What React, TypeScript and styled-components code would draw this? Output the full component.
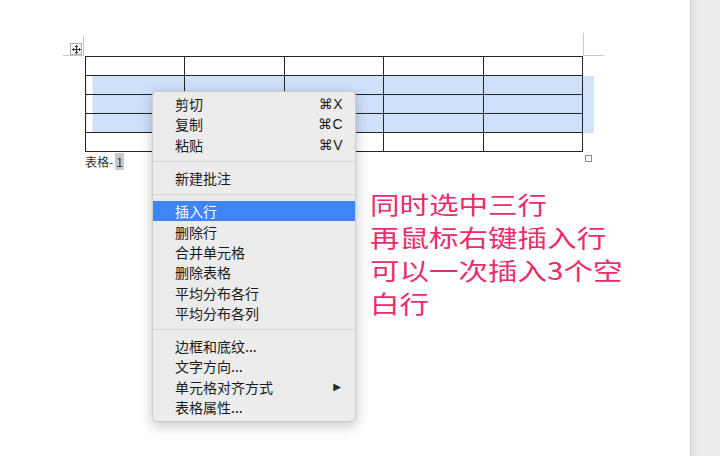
import React from "react";
import styled, { createGlobalStyle } from "styled-components";

const GlobalStyle = createGlobalStyle`
  html, body {
    margin: 0;
    padding: 0;
    background: #fff;
  }
  body {
    width: 720px;
    height: 456px;
    overflow: hidden;
    font-family: "Noto Sans CJK SC", "Noto Sans", sans-serif;
  }
`;

const Screen = styled.div`
  display: flex;
  width: 720px;
  height: 456px;
`;

const Page = styled.div`
  position: relative;
  flex: 1;
  padding: 56px 0 0 85px;
  background: #fff;
`;

const Gutter = styled.div`
  width: 29px;
  border-left: 1px solid #d4d4d4;
  background: linear-gradient(to right, #e2e2e2, #eeeeee 35%, #ebebeb);
`;

/* table block, with Word's corner guides drawn by the pseudo elements */
const TableArea = styled.div`
  position: relative;
  width: 520px;

  &::before {
    content: "";
    position: absolute;
    left: -22px;
    top: -20px;
    width: 20px;
    height: 19px;
    border-right: 1px solid #c9c9c9;
    border-bottom: 1px solid #c9c9c9;
  }

  &::after {
    content: "";
    position: absolute;
    left: 498px;
    top: -23px;
    width: 20px;
    height: 22px;
    border-left: 1px solid #c9c9c9;
    border-bottom: 1px solid #c9c9c9;
  }
`;

const Grid = styled.table`
  border-collapse: collapse;
  table-layout: fixed;
`;

const Row = styled.tr`
  height: 19px;
`;

const Cell = styled.td<{ $sel?: boolean; $first?: boolean }>`
  width: 99.4px;
  height: 19px;
  padding: 0;
  box-sizing: border-box;
  border: 1px solid #262626;
  background: ${({ $sel, $first }) =>
    !$sel
      ? "transparent"
      : $first
      ? "linear-gradient(to right, transparent 6px, #cfe0fb 6px)"
      : "#cfe0fb"};
`;

const EndMark = styled.td<{ $sel?: boolean }>`
  width: 11px;
  padding: 0;
  border: none;
  background: ${({ $sel }) => ($sel ? "#d4e3fb" : "transparent")};
`;

const Caption = styled.div`
  margin-top: 2px;
  font-family: "Noto Sans CJK SC", serif;
  font-size: 12px;
  line-height: 16px;
  color: #333;
`;

const Mark = styled.span`
  background: #c9c9c9;
  padding: 0 1px;
  margin-left: 2px;
`;

const ResizeHandle = styled.div`
  position: absolute;
  left: 500px;
  top: 99px;
  width: 5px;
  height: 5px;
  border: 1px solid #8a8a8a;
  background: #fff;
`;

const MoveHandle = styled.div`
  position: absolute;
  left: -15px;
  top: -13px;
  width: 10px;
  height: 10px;
  border: 1px solid #b0b0b0;
  background: #f3f3f3;
  display: flex;
  align-items: center;
  justify-content: center;
`;

const Menu = styled.div`
  position: absolute;
  left: 152px;
  top: 91px;
  width: 204px;
  box-sizing: border-box;
  padding: 2px 0 4px;
  background: #ececec;
  border: 1px solid rgba(0, 0, 0, 0.13);
  border-radius: 5px;
  box-shadow: 0 4px 14px rgba(0, 0, 0, 0.22), 0 0 2px rgba(0, 0, 0, 0.1);
`;

const Item = styled.div<{ $active?: boolean }>`
  display: flex;
  align-items: center;
  justify-content: space-between;
  height: 20.3px;
  padding: 0 12px 0 22px;
  font-size: 14px;
  color: ${({ $active }) => ($active ? "#fff" : "#1a1a1a")};
  background: ${({ $active }) => ($active ? "#3e86f3" : "transparent")};
`;

const Shortcut = styled.span`
  font-family: "Liberation Sans", "DejaVu Sans", sans-serif;
  font-size: 14px;
  letter-spacing: 0.5px;
`;

const Arrow = styled.span`
  font-family: "DejaVu Sans", sans-serif;
  font-size: 10px;
  margin-right: 2px;
  color: #2a2a2a;
`;

const Separator = styled.div`
  height: 1px;
  margin: 6px 0;
  background: #d2d2d2;
`;

const Note = styled.div`
  position: absolute;
  left: 370px;
  top: 187px;
  font-size: 24px;
  line-height: 33px;
  color: #e92d6c;
  transform: scaleX(1.23);
  transform-origin: left top;
  white-space: nowrap;
`;

type MenuEntry =
  | { label: string; key?: string; active?: boolean; sub?: boolean }
  | "sep";

const entries: MenuEntry[] = [
  { label: "剪切", key: "⌘X" },
  { label: "复制", key: "⌘C" },
  { label: "粘贴", key: "⌘V" },
  "sep",
  { label: "新建批注" },
  "sep",
  { label: "插入行", active: true },
  { label: "删除行" },
  { label: "合并单元格" },
  { label: "删除表格" },
  { label: "平均分布各行" },
  { label: "平均分布各列" },
  "sep",
  { label: "边框和底纹..." },
  { label: "文字方向..." },
  { label: "单元格对齐方式", sub: true },
  { label: "表格属性..." },
];

const noteLines = ["同时选中三行", "再鼠标右键插入行", "可以一次插入3个空", "白行"];

const MoveIcon = () => (
  <svg width="9" height="9" viewBox="0 0 9 9" fill="none" stroke="#333" strokeWidth="1">
    <path d="M4.5 0.5v8M0.5 4.5h8" />
    <path d="M3 2l1.5-1.5L6 2M3 7l1.5 1.5L6 7M2 3L0.5 4.5 2 6M7 3l1.5 1.5L7 6" />
  </svg>
);

export default function App() {
  const rows = [false, true, true, true, false];
  return (
    <Screen>
      <GlobalStyle />
      <Page>
        <TableArea>
          <MoveHandle>
            <MoveIcon />
          </MoveHandle>
          <Grid>
            <tbody>
              {rows.map((sel, r) => (
                <Row key={r}>
                  {[0, 1, 2, 3, 4].map((c) => (
                    <Cell key={c} $sel={sel} $first={c === 0} />
                  ))}
                  <EndMark $sel={sel} />
                </Row>
              ))}
            </tbody>
          </Grid>
          <Caption>
            表格-<Mark>1</Mark>
          </Caption>
          <ResizeHandle />
        </TableArea>

        <Menu>
          {entries.map((e, i) =>
            e === "sep" ? (
              <Separator key={i} />
            ) : (
              <Item key={i} $active={e.active}>
                <span>{e.label}</span>
                {e.key && <Shortcut>{e.key}</Shortcut>}
                {e.sub && <Arrow>▶</Arrow>}
              </Item>
            )
          )}
        </Menu>

        <Note>
          {noteLines.map((l) => (
            <div key={l}>{l}</div>
          ))}
        </Note>
      </Page>
      <Gutter />
    </Screen>
  );
}
